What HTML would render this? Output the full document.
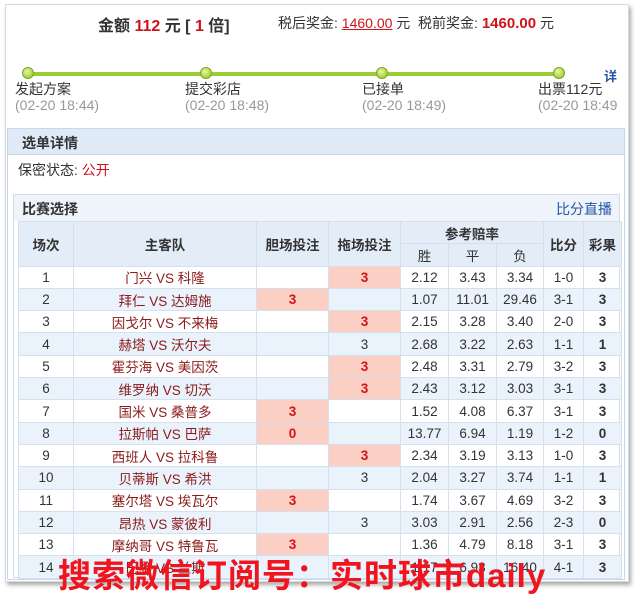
<!DOCTYPE html>
<html><head><meta charset="utf-8"><style>
*{margin:0;padding:0;box-sizing:border-box}
body{width:640px;height:592px;background:#fff;font-family:"Liberation Sans","Noto Sans CJK SC",sans-serif;color:#333;position:relative;overflow:hidden;font-size:13px}
.a{position:absolute;white-space:nowrap}
.r{color:#d0121b}
.g{color:#999}
.frame{position:absolute;left:5px;top:4px;width:624px;height:578px;border:1px solid #d4dbe4;box-shadow:2px 3px 4px #aaa}
.bar{position:absolute;top:72px;height:4px;background:#9acd32;left:28px;width:532px}
.dot{position:absolute;top:67px;width:12px;height:12px;border-radius:50%;background:radial-gradient(circle at 40% 35%,#e6f7a0,#8cc11e);border:1px solid #7aa820}
table{position:absolute;left:18px;top:221px;border-collapse:collapse;font-size:13.5px}
td,th{border:1px solid #d5e0ec;text-align:center;height:22.3px;padding:0}
th{background:#e3edf8;font-weight:bold;color:#333;font-size:13.5px}
tr.o td{background:#eaf2fb}
td.t{color:#8b1a1a}
td.h{background:#fbcfc3!important;color:#d0121b;font-weight:bold}
td.b{font-weight:bold}
</style></head><body>
<div class="frame"></div>
<div class="a" style="left:98px;top:12px;font-size:16px;font-weight:bold;color:#333">金额 <span class="r">112</span> 元 [ <span class="r">1</span> 倍]</div>
<div class="a" style="left:278px;top:13px;font-size:14px">税后奖金: <span class="r" style="text-decoration:underline;font-weight:normal">1460.00</span> 元 &nbsp;税前奖金: <span class="r" style="font-weight:bold;font-size:15px">1460.00</span> 元</div>
<div class="bar"></div>
<div class="dot" style="left:22px"></div><div class="dot" style="left:200px"></div><div class="dot" style="left:376px"></div><div class="dot" style="left:553px"></div>
<div class="a" style="left:604px;top:66px;color:#2456a6;font-weight:bold;font-size:13px">详</div>
<div class="a" style="left:15px;top:79px;font-size:14px">发起方案</div>
<div class="a" style="left:185px;top:79px;font-size:14px">提交彩店</div>
<div class="a" style="left:362px;top:79px;font-size:14px">已接单</div>
<div class="a" style="left:538px;top:79px;font-size:14px">出票112元</div>
<div class="a g" style="left:15px;top:97px;font-size:14px">(02-20 18:44)</div>
<div class="a g" style="left:185px;top:97px;font-size:14px">(02-20 18:48)</div>
<div class="a g" style="left:362px;top:97px;font-size:14px">(02-20 18:49)</div>
<div class="a g" style="left:538px;top:97px;font-size:14px">(02-20 18:49</div>
<div class="a" style="left:7px;top:128px;width:618px;height:452px;border:1px solid #c8d8ea"></div>
<div class="a" style="left:8px;top:129px;width:616px;height:26px;background:#dfeaf6;border-bottom:1px solid #c8d8ea"></div>
<div class="a" style="left:22px;top:133px;font-weight:bold;font-size:14px">选单详情</div>
<div class="a" style="left:18px;top:160px;font-size:14px">保密状态: <span class="r">公开</span></div>
<div class="a" style="left:13px;top:194px;width:607px;height:384px;border:1px solid #d0deec;background:#fff"></div>
<div class="a" style="left:14px;top:195px;width:605px;height:26px;background:#eef4fa"></div>
<div class="a" style="left:22px;top:199px;font-weight:bold;font-size:14px">比赛选择</div>
<div class="a" style="left:556px;top:199px;color:#2456a6;font-size:14px">比分直播</div>
<table>
<colgroup><col style="width:55px"><col style="width:183px"><col style="width:72px"><col style="width:72px"><col style="width:48px"><col style="width:48px"><col style="width:47px"><col style="width:40px"><col style="width:38px"></colgroup>
<tr><th rowspan="2">场次</th><th rowspan="2">主客队</th><th rowspan="2">胆场投注</th><th rowspan="2">拖场投注</th><th colspan="3">参考赔率</th><th rowspan="2">比分</th><th rowspan="2">彩果</th></tr>
<tr><th style="font-weight:normal">胜</th><th style="font-weight:normal">平</th><th style="font-weight:normal">负</th></tr>
<tr><td>1</td><td class="t">门兴 VS 科隆</td><td></td><td class="h">3</td><td>2.12</td><td>3.43</td><td>3.34</td><td>1-0</td><td class="b">3</td></tr>
<tr class="o"><td>2</td><td class="t">拜仁 VS 达姆施</td><td class="h">3</td><td></td><td>1.07</td><td>11.01</td><td>29.46</td><td>3-1</td><td class="b">3</td></tr>
<tr><td>3</td><td class="t">因戈尔 VS 不来梅</td><td></td><td class="h">3</td><td>2.15</td><td>3.28</td><td>3.40</td><td>2-0</td><td class="b">3</td></tr>
<tr class="o"><td>4</td><td class="t">赫塔 VS 沃尔夫</td><td></td><td>3</td><td>2.68</td><td>3.22</td><td>2.63</td><td>1-1</td><td class="b">1</td></tr>
<tr><td>5</td><td class="t">霍芬海 VS 美因茨</td><td></td><td class="h">3</td><td>2.48</td><td>3.31</td><td>2.79</td><td>3-2</td><td class="b">3</td></tr>
<tr class="o"><td>6</td><td class="t">维罗纳 VS 切沃</td><td></td><td class="h">3</td><td>2.43</td><td>3.12</td><td>3.03</td><td>3-1</td><td class="b">3</td></tr>
<tr><td>7</td><td class="t">国米 VS 桑普多</td><td class="h">3</td><td></td><td>1.52</td><td>4.08</td><td>6.37</td><td>3-1</td><td class="b">3</td></tr>
<tr class="o"><td>8</td><td class="t">拉斯帕 VS 巴萨</td><td class="h">0</td><td></td><td>13.77</td><td>6.94</td><td>1.19</td><td>1-2</td><td class="b">0</td></tr>
<tr><td>9</td><td class="t">西班人 VS 拉科鲁</td><td></td><td class="h">3</td><td>2.34</td><td>3.19</td><td>3.13</td><td>1-0</td><td class="b">3</td></tr>
<tr class="o"><td>10</td><td class="t">贝蒂斯 VS 希洪</td><td></td><td>3</td><td>2.04</td><td>3.27</td><td>3.74</td><td>1-1</td><td class="b">1</td></tr>
<tr><td>11</td><td class="t">塞尔塔 VS 埃瓦尔</td><td class="h">3</td><td></td><td>1.74</td><td>3.67</td><td>4.69</td><td>3-2</td><td class="b">3</td></tr>
<tr class="o"><td>12</td><td class="t">昂热 VS 蒙彼利</td><td></td><td>3</td><td>3.03</td><td>2.91</td><td>2.56</td><td>2-3</td><td class="b">0</td></tr>
<tr><td>13</td><td class="t">摩纳哥 VS 特鲁瓦</td><td class="h">3</td><td></td><td>1.36</td><td>4.79</td><td>8.18</td><td>3-1</td><td class="b">3</td></tr>
<tr class="o"><td>14</td><td class="t">巴黎 VS 兰斯</td><td></td><td></td><td>1.17</td><td>6.93</td><td>16.40</td><td>4-1</td><td class="b">3</td></tr>
</table>
<div class="a" style="left:58px;top:549px;font-size:33px;font-weight:bold;color:#f0141e;letter-spacing:1px">搜索微信订阅号：实时球市daily</div>
</body></html>
